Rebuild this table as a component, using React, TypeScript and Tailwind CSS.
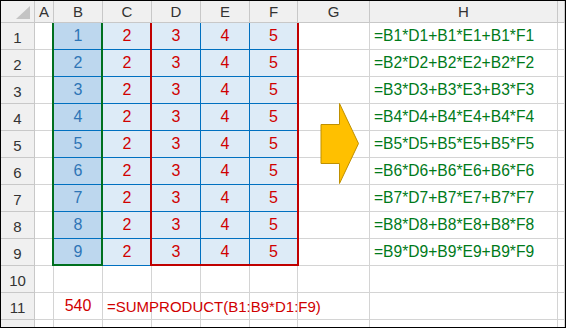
import React from "react";

const cols = ["A", "B", "C", "D", "E", "F", "G", "H", ""];
const rows = [1, 2, 3, 4, 5, 6, 7, 8, 9, 10, 11, 12];

const headerCell =
  "flex items-center justify-center bg-[#f0f0f0] border-r border-b border-[#c8c8c8] text-[#333]";

function cellClass(r: number, c: number) {
  // c: 0 = A ... 7 = H, 8 = filler
  const inBlock = r <= 9 && c >= 1 && c <= 5;
  if (inBlock) {
    const bg = c === 1 ? "bg-[#bdd7ee]" : "bg-[#ddebf7]";
    return `${bg} border-r border-b border-[#0070c0]`;
  }
  return "bg-white border-r border-b border-[#d4d4d4]";
}

function cellContent(r: number, c: number) {
  if (r <= 9) {
    if (c === 1) return <span className="text-[16px] text-[#2e75b6]">{r}</span>;
    if (c === 2) return <span className="text-[16px] text-[#d00000]">2</span>;
    if (c === 3) return <span className="text-[16px] text-[#d00000]">3</span>;
    if (c === 4) return <span className="text-[16px] text-[#d00000]">4</span>;
    if (c === 5) return <span className="text-[16px] text-[#d00000]">5</span>;
    if (c === 7)
      return (
        <span className="text-[15.6px] text-[#007a1a]">
          =B{r}*D{r}+B{r}*E{r}+B{r}*F{r}
        </span>
      );
  }
  if (r === 11) {
    if (c === 1) return <span className="text-[16px] text-[#d00000]">540</span>;
    if (c === 2)
      return (
        <span className="text-[#d00000] whitespace-nowrap relative z-10">
          =SUMPRODUCT(B1:B9*D1:F9)
        </span>
      );
  }
  return null;
}

function align(r: number, c: number) {
  if (c === 7 || (r === 11 && c === 2)) return "justify-start pl-[4px] overflow-visible";
  return "justify-center";
}

export default function App() {
  return (
    <div className="w-[567px] h-[329px] bg-white font-['Liberation_Sans',Arial,sans-serif] text-[15px] leading-none">
      <div className="relative w-[566px] h-[328px] border border-black overflow-hidden">
        <div className="grid grid-cols-[34px_19px_49px_49px_49px_49px_48px_72px_188px_1fr] grid-rows-[22px_repeat(12,27px)]">
          <div className={headerCell + " items-end justify-end pr-[3px] pb-[3px]"}>
            <svg width="15" height="13" viewBox="0 0 15 13">
              <polygon points="14,0 14,13 0,13" fill="#c4c4c4" />
            </svg>
          </div>
          {cols.map((c, i) => (
            <div key={i} className={headerCell}>
              {c}
            </div>
          ))}
          {rows.map((r) => (
            <React.Fragment key={r}>
              <div className={headerCell + " items-end pb-[4px]"}>{r <= 11 ? r : ""}</div>
              {cols.map((_, c) => (
                <div
                  key={c}
                  className={`flex items-center ${align(r, c)} ${cellClass(r, c)}`}
                >
                  {cellContent(r, c)}
                </div>
              ))}
            </React.Fragment>
          ))}
        </div>

        {/* range outlines */}
        <div className="absolute left-[51px] top-[22px] w-[51px] h-[243px] border-2 border-t-0 border-[#00701f]" />
        <div className="absolute left-[149px] top-[22px] w-[149px] h-[243px] border-2 border-t-0 border-[#c00000]" />

        {/* arrow */}
        <svg
          className="absolute left-[319px] top-[102px]"
          width="40"
          height="82"
          viewBox="0 0 40 82"
        >
          <polygon
            points="1,21.5 19.5,21.5 19.5,0.5 38.5,40.5 19.5,80.5 19.5,60.5 1,60.5"
            fill="#ffc000"
            stroke="#bf9000"
            strokeWidth="1"
          />
        </svg>
      </div>
    </div>
  );
}
